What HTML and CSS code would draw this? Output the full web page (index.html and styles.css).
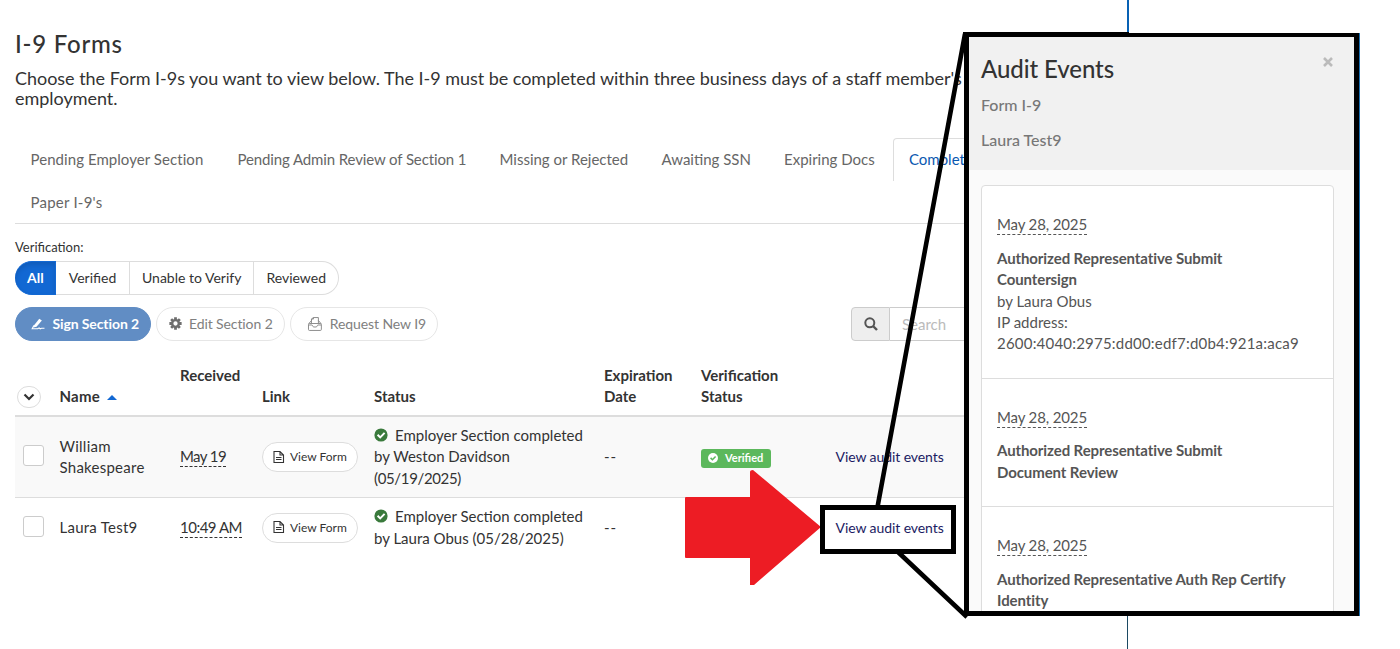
FILE: index.html
```
<!DOCTYPE html>
<html lang="en">
<head>
  <meta charset="UTF-8">
  <meta name="viewport" content="width=device-width, initial-scale=1">
  <title>I-9 Forms</title>
  <link rel="stylesheet" href="styles.css">
</head>
<body>
  <!-- shared icons -->
  <svg width="0" height="0" class="sprite">
    <symbol id="check" viewBox="0 0 14 14">
      <circle cx="7" cy="7" r="6.6" fill="currentColor"/>
      <path d="M3.6 6.8l2.6 2.6 4.4-4.5" fill="none" stroke="#fff" stroke-width="2"/>
    </symbol>
    <symbol id="file" viewBox="0 0 12 14">
      <path d="M1 1.500h6L10.500 5v7.500H1zM7 1.500v3.500h3.500M3 7.500h5.500M3 9.500h5.500" fill="none" stroke="currentColor" stroke-width="1.1"/>
    </symbol>
  </svg>

  <main class="page">
    <h1>I-9 Forms</h1>
    <p class="lead">Choose the Form I-9s you want to view below. The I-9 must be completed within three business days of a staff member's<br>employment.</p>

    <ul class="tabs">
      <li>Pending Employer Section</li>
      <li class="tight">Pending Admin Review of Section 1</li>
      <li>Missing or Rejected</li>
      <li>Awaiting SSN</li>
      <li>Expiring Docs</li>
      <li class="active">Completed</li>
      <li class="paper">Paper I-9's</li>
    </ul>

    <div class="filter-label">Verification:</div>
    <div class="btn-group">
      <button class="active">All</button>
      <button>Verified</button>
      <button>Unable to Verify</button>
      <button>Reviewed</button>
    </div>

    <div class="toolbar">
      <button class="btn btn-primary">
        <svg width="16" height="14" viewBox="0 0 16 14"><path d="M3.2 8.600L9.200 1.200l2.900 1.800-6 7-3.400 1z" fill="currentColor"/><path d="M3.200 8.600L1.300 12.300h6.200l1.500-1 1.200 1 1.600-.600h3.200" fill="none" stroke="currentColor" stroke-width="1.2"/></svg>
        Sign Section 2
      </button>
      <button class="btn btn-edit">
        <svg width="13" height="13" viewBox="0 0 14 14"><g stroke="currentColor" stroke-width="3"><path d="M7 .4v13.2M.4 7h13.2M2.3 2.3l9.4 9.4M11.7 2.3l-9.4 9.4"/></g><circle cx="7" cy="7" r="3.6" fill="#fff" stroke="currentColor" stroke-width="2.6"/></svg>
        Edit Section 2
      </button>
      <button class="btn btn-request">
        <svg width="16" height="16" viewBox="0 0 16 16"><g fill="none" stroke="currentColor" stroke-width="0.9"><rect x="1.500" y="7.500" width="13" height="7" rx="1"/><path d="M1.800 7.600L4.500 4.500M14.200 7.600l-2.700-3.100M4.500 7V3l2-1.500h5V7M6.500 1.500V3h-2M1.800 9h3.200c.6 0 .8 2 1.800 2h2.400c1 0 1.200-2 1.800-2h3.200"/></g></svg>
        Request New I9
      </button>
      <div class="search">
        <span class="search-icon">
          <svg width="14" height="14" viewBox="0 0 14 14"><circle cx="5.8" cy="5.8" r="4.5" fill="none" stroke="currentColor" stroke-width="2"/><path d="M9 9l4 4" stroke="currentColor" stroke-width="2.4"/></svg>
        </span>
        <input type="text" placeholder="Search">
      </div>
    </div>

    <table>
      <colgroup>
        <col class="c-check"><col class="c-name"><col class="c-received"><col class="c-link"><col class="c-status"><col class="c-exp"><col class="c-verif"><col>
      </colgroup>
      <thead>
        <tr>
          <th class="toggle-cell"><span class="toggle"><svg width="12" height="8" viewBox="0 0 12 8"><path d="M1.5 1.5L6 6l4.5-4.5" fill="none" stroke="currentColor" stroke-width="2.2"/></svg></span></th>
          <th class="name">Name <span class="sort"></span></th>
          <th>Received<br>&nbsp;</th>
          <th>Link</th>
          <th>Status</th>
          <th>Expiration<br>Date</th>
          <th>Verification<br>Status</th>
          <th></th>
        </tr>
      </thead>
      <tbody>
        <tr class="odd">
          <td><span class="checkbox"></span></td>
          <td class="name">William<br>Shakespeare</td>
          <td><span class="date short">May 19</span></td>
          <td><button class="btn-view"><svg width="12" height="14"><use href="#file"/></svg>View Form</button></td>
          <td><svg class="ok" width="14" height="14"><use href="#check"/></svg>Employer Section completed<br>by Weston Davidson<br><span class="digits">(05/19/2025)</span></td>
          <td class="none">--</td>
          <td><span class="label"><svg width="10" height="10" viewBox="0 0 14 14"><circle cx="7" cy="7" r="7" fill="#fff"/><path d="M3.6 6.8l2.6 2.6 4.4-4.5" fill="none" stroke="#5cb85c" stroke-width="2.2"/></svg>Verified</span></td>
          <td><a class="audit">View audit events</a></td>
        </tr>
        <tr>
          <td><span class="checkbox"></span></td>
          <td class="name">Laura Test9</td>
          <td><span class="date time">10:49 AM</span></td>
          <td><button class="btn-view"><svg width="12" height="14"><use href="#file"/></svg>View Form</button></td>
          <td><svg class="ok" width="14" height="14"><use href="#check"/></svg>Employer Section completed<br>by Laura Obus (05/28/2025)</td>
          <td class="none">--</td>
          <td></td>
          <td><a class="audit">View audit events</a></td>
        </tr>
      </tbody>
    </table>
  </main>

  <!-- audit events panel -->
  <aside class="panel">
    <header>
      <svg class="close" width="10" height="10" viewBox="0 0 10 10"><path d="M1 1l8 8M9 1L1 9" stroke="currentColor" stroke-width="2.6"/></svg>
      <h2>Audit Events</h2>
      <h4>Form I-9</h4>
      <h4>Laura Test9</h4>
    </header>
    <div class="events">
      <div class="event">
        <span class="date">May 28, 2025</span>
        <p><b>Authorized Representative Submit<br>Countersign</b><br>by Laura Obus<br>IP address:<br><span class="ip">2600:4040:2975:dd00:edf7:d0b4:921a:aca9</span></p>
      </div>
      <div class="event">
        <span class="date">May 28, 2025</span>
        <p><b>Authorized Representative Submit<br>Document Review</b></p>
      </div>
      <div class="event">
        <span class="date">May 28, 2025</span>
        <p><b>Authorized Representative Auth Rep Certify<br>Identity</b></p>
      </div>
    </div>
  </aside>

  <!-- arrow, highlight box and callout lines -->
  <svg class="marks" width="1400" height="649" viewBox="0 0 1400 649">
    <path d="M1127 0h2v33h-2z" fill="#0861b4"/>
    <path d="M1127 616h1v33h-1z" fill="#1c4a63"/>
    <path d="M1359 33h1v583h-1z" fill="#1b6fae"/>
    <path d="M685 498q0-1 1-1h64v-25q0-2 3-2l68 57-67 58h-4v-27h-64q-1 0-1-1z" fill="#ed1c24"/>
    <g fill="none" stroke="#000">
      <path d="M877.500 507L965 34M898 552l69 65" stroke-width="4.600"/>
      <path d="M822.500 507.500h131v44h-131z" stroke-width="5"/>
    </g>
    <path d="M963 32h6v20h-6z"/>
    <path d="M963 32h166v4H963z"/>
  </svg>
</body>
</html>
```
FILE: styles.css
```
* {
  box-sizing: border-box;
}
body {
  margin: 0;
  height: 649px;
  overflow: hidden;
  position: relative;
  background: #fff;
  color: #333;
  font: 15px/21.43px Lato, "Liberation Sans", sans-serif;
}
button, input {
  font-family: inherit;
  color: inherit;
}
.sprite {
  position: absolute;
}
.page {
  width: 1127px;
  padding: 29px 0 0 15px;
}
h1 {
  margin: 0 0 11px;
  font-size: 24px;
  font-weight: 500;
  line-height: 29px;
  letter-spacing: 0.75px;
}
.lead {
  margin: 0;
  font-size: 18px;
  line-height: 19.5px;
  white-space: nowrap;
  letter-spacing: -0.03px;
}

/* tabs */
.tabs {
  display: grid;
  grid-template-columns: 207px 262px 162px 122.5px 124.5px 115px;
  grid-template-rows: 43px 42px;
  justify-content: start;
  margin: 30px 0 0;
  padding: 0;
  list-style: none;
  color: #666;
  border-bottom: 1px solid #ddd;
}
.tabs li {
  padding: 11px 15.5px;
  white-space: nowrap;
}
.tabs li:first-child {
  letter-spacing: 0.06px;
}
.tabs .tight {
  letter-spacing: -0.12px;
}
.tabs .active {
  padding: 10px 15px;
  color: #0a58b0;
  border: 1px solid #ddd;
  border-bottom: 0;
  border-radius: 4px 4px 0 0;
}
.tabs .paper {
  letter-spacing: 0.23px;
}

/* verification filter */
.filter-label {
  margin: 14px 0 4px;
  font-size: 13px;
  line-height: 19px;
}
.btn-group {
  display: flex;
}
.btn-group button {
  height: 34px;
  padding: 0 12px 2px;
  background: #fff;
  border: 1px solid #ddd;
  border-left-width: 0;
  font-size: 14px;
}
.btn-group button:nth-child(2) {
  width: 74px;
}
.btn-group button:last-child {
  border-radius: 0 17px 17px 0;
}
.btn-group .active {
  width: 41px;
  background: #1268d3;
  border-color: #1268d3;
  border-radius: 17px 0 0 17px;
  box-shadow: inset 0 3px 5px rgba(0, 0, 0, 0.125);
  color: #fff;
  font-weight: bold;
}

/* action buttons and search */
.toolbar {
  display: flex;
  gap: 5px;
  margin-top: 12px;
}
.btn {
  display: flex;
  align-items: center;
  gap: 7px;
  height: 34px;
  padding: 0 11px 1px 15px;
  background: #fff;
  border: 1px solid #e6e6e6;
  border-radius: 17px;
  color: #808080;
  font-size: 14px;
  white-space: nowrap;
  letter-spacing: -0.1px;
}
.btn-primary {
  width: 136px;
  background: #618dc4;
  border-color: #618dc4;
  color: #fff;
  font-weight: bold;
}
.btn-edit {
  width: 129px;
  padding-left: 12px;
}
.btn-edit svg {
  color: #6e6e6e;
}
.btn-request {
  width: 148px;
  padding-left: 16px;
}
.search {
  display: flex;
  margin-left: auto;
  width: 291px;
  height: 34px;
  margin-right: -15px;
}
.search-icon {
  display: flex;
  align-items: center;
  justify-content: center;
  width: 39px;
  background: #eee;
  border: 1px solid #ccc;
  border-radius: 4px 0 0 4px;
  color: #555;
}
.search input {
  flex: 1;
  min-width: 0;
  padding: 0 12px 1px;
  border: 1px solid #ccc;
  border-left: 0;
  font-size: 15px;
}
.search input::placeholder {
  color: #bbb;
}

/* forms table */
table {
  width: 1112px;
  margin-top: 15px;
  table-layout: fixed;
  border-collapse: separate;
  border-spacing: 0;
}
.c-check { width: 36px; }
.c-name { width: 121px; }
.c-received { width: 82px; }
.c-link { width: 112px; }
.c-status { width: 230px; }
.c-exp { width: 97px; }
.c-verif { width: 134px; }
th, td {
  padding: 8px;
  text-align: left;
  white-space: nowrap;
}
th {
  padding: 9px 8px 7px;
  vertical-align: bottom;
  border-bottom: 2px solid #ddd;
}
th.toggle-cell {
  padding-left: 2px;
}
.odd td {
  background: #f9f9f9;
  border-bottom: 1px solid #ddd;
}
.toggle {
  display: flex;
  align-items: center;
  justify-content: center;
  width: 24px;
  height: 22px;
  border: 1px solid #ddd;
  border-radius: 12px;
}
.sort {
  display: inline-block;
  margin: 0 0 2px 3px;
  border: 5px solid transparent;
  border-top: 0;
  border-bottom-color: #1268d3;
}
.checkbox {
  display: block;
  width: 21px;
  height: 21px;
  margin-top: -3px;
  background: #fff;
  border: 1px solid #ccc;
  border-radius: 3px;
}
.name {
  padding-left: 8.5px;
  letter-spacing: 0.25px;
}
.none {
  letter-spacing: 1px;
}
.date {
  display: inline-block;
  line-height: 19px;
  border-bottom: 1px dashed #333;
}
.short {
  letter-spacing: -0.6px;
}
.time {
  letter-spacing: -0.5px;
}
.digits {
  letter-spacing: -0.35px;
}
.btn-view {
  display: flex;
  align-items: center;
  gap: 5px;
  width: 96px;
  height: 30px;
  padding: 0 10px 1px;
  background: #fff;
  border: 1px solid #ddd;
  border-radius: 15px;
  font-size: 12px;
  white-space: nowrap;
}
.ok {
  margin-right: 7px;
  vertical-align: -1px;
  color: #3a7a3c;
}
.label {
  display: flex;
  align-items: center;
  gap: 7px;
  width: 70px;
  height: 19px;
  margin-top: 3px;
  padding: 0 0 1px 7px;
  background: #5cb85c;
  border-radius: 3px;
  color: #fff;
  font-size: 11px;
  font-weight: bold;
}
.audit {
  padding-left: 0.5px;
  color: #1b1b63;
  font-size: 14px;
  letter-spacing: -0.08px;
}

/* audit panel */
.panel {
  position: absolute;
  left: 964px;
  top: 33px;
  width: 395px;
  height: 583px;
  overflow: hidden;
  background: #fafafa;
  border: 5px solid #000;
  border-top-width: 4px;
  color: #555;
}
.panel header {
  height: 133px;
  padding: 16px 12px 0;
  background: #f1f1f1;
}
.close {
  float: right;
  margin: 4px 9px 0 0;
  color: #bbb;
}
.panel h2 {
  margin: 0 0 10px;
  color: #333;
  font-size: 24px;
  font-weight: 500;
  line-height: 32px;
  letter-spacing: -0.09px;
}
.panel h4 {
  margin: 0 0 15px;
  color: #777;
  font-size: 16px;
  font-weight: 500;
  line-height: 20px;
}
.events {
  width: 353px;
  margin: 15px 12px;
  background: #fff;
  border: 1px solid #ddd;
  border-radius: 4px;
}
.event {
  padding: 28px 15px 23px;
  border-bottom: 1px solid #ddd;
}
.event .date {
  border-color: #555;
  letter-spacing: -0.14px;
}
.event p {
  margin: 12.2px 0 0;
}
.event b {
  letter-spacing: -0.1px;
}
.ip {
  letter-spacing: 0.21px;
}

/* drawn over the page */
.marks {
  position: absolute;
  left: 0;
  top: 0;
}
```
